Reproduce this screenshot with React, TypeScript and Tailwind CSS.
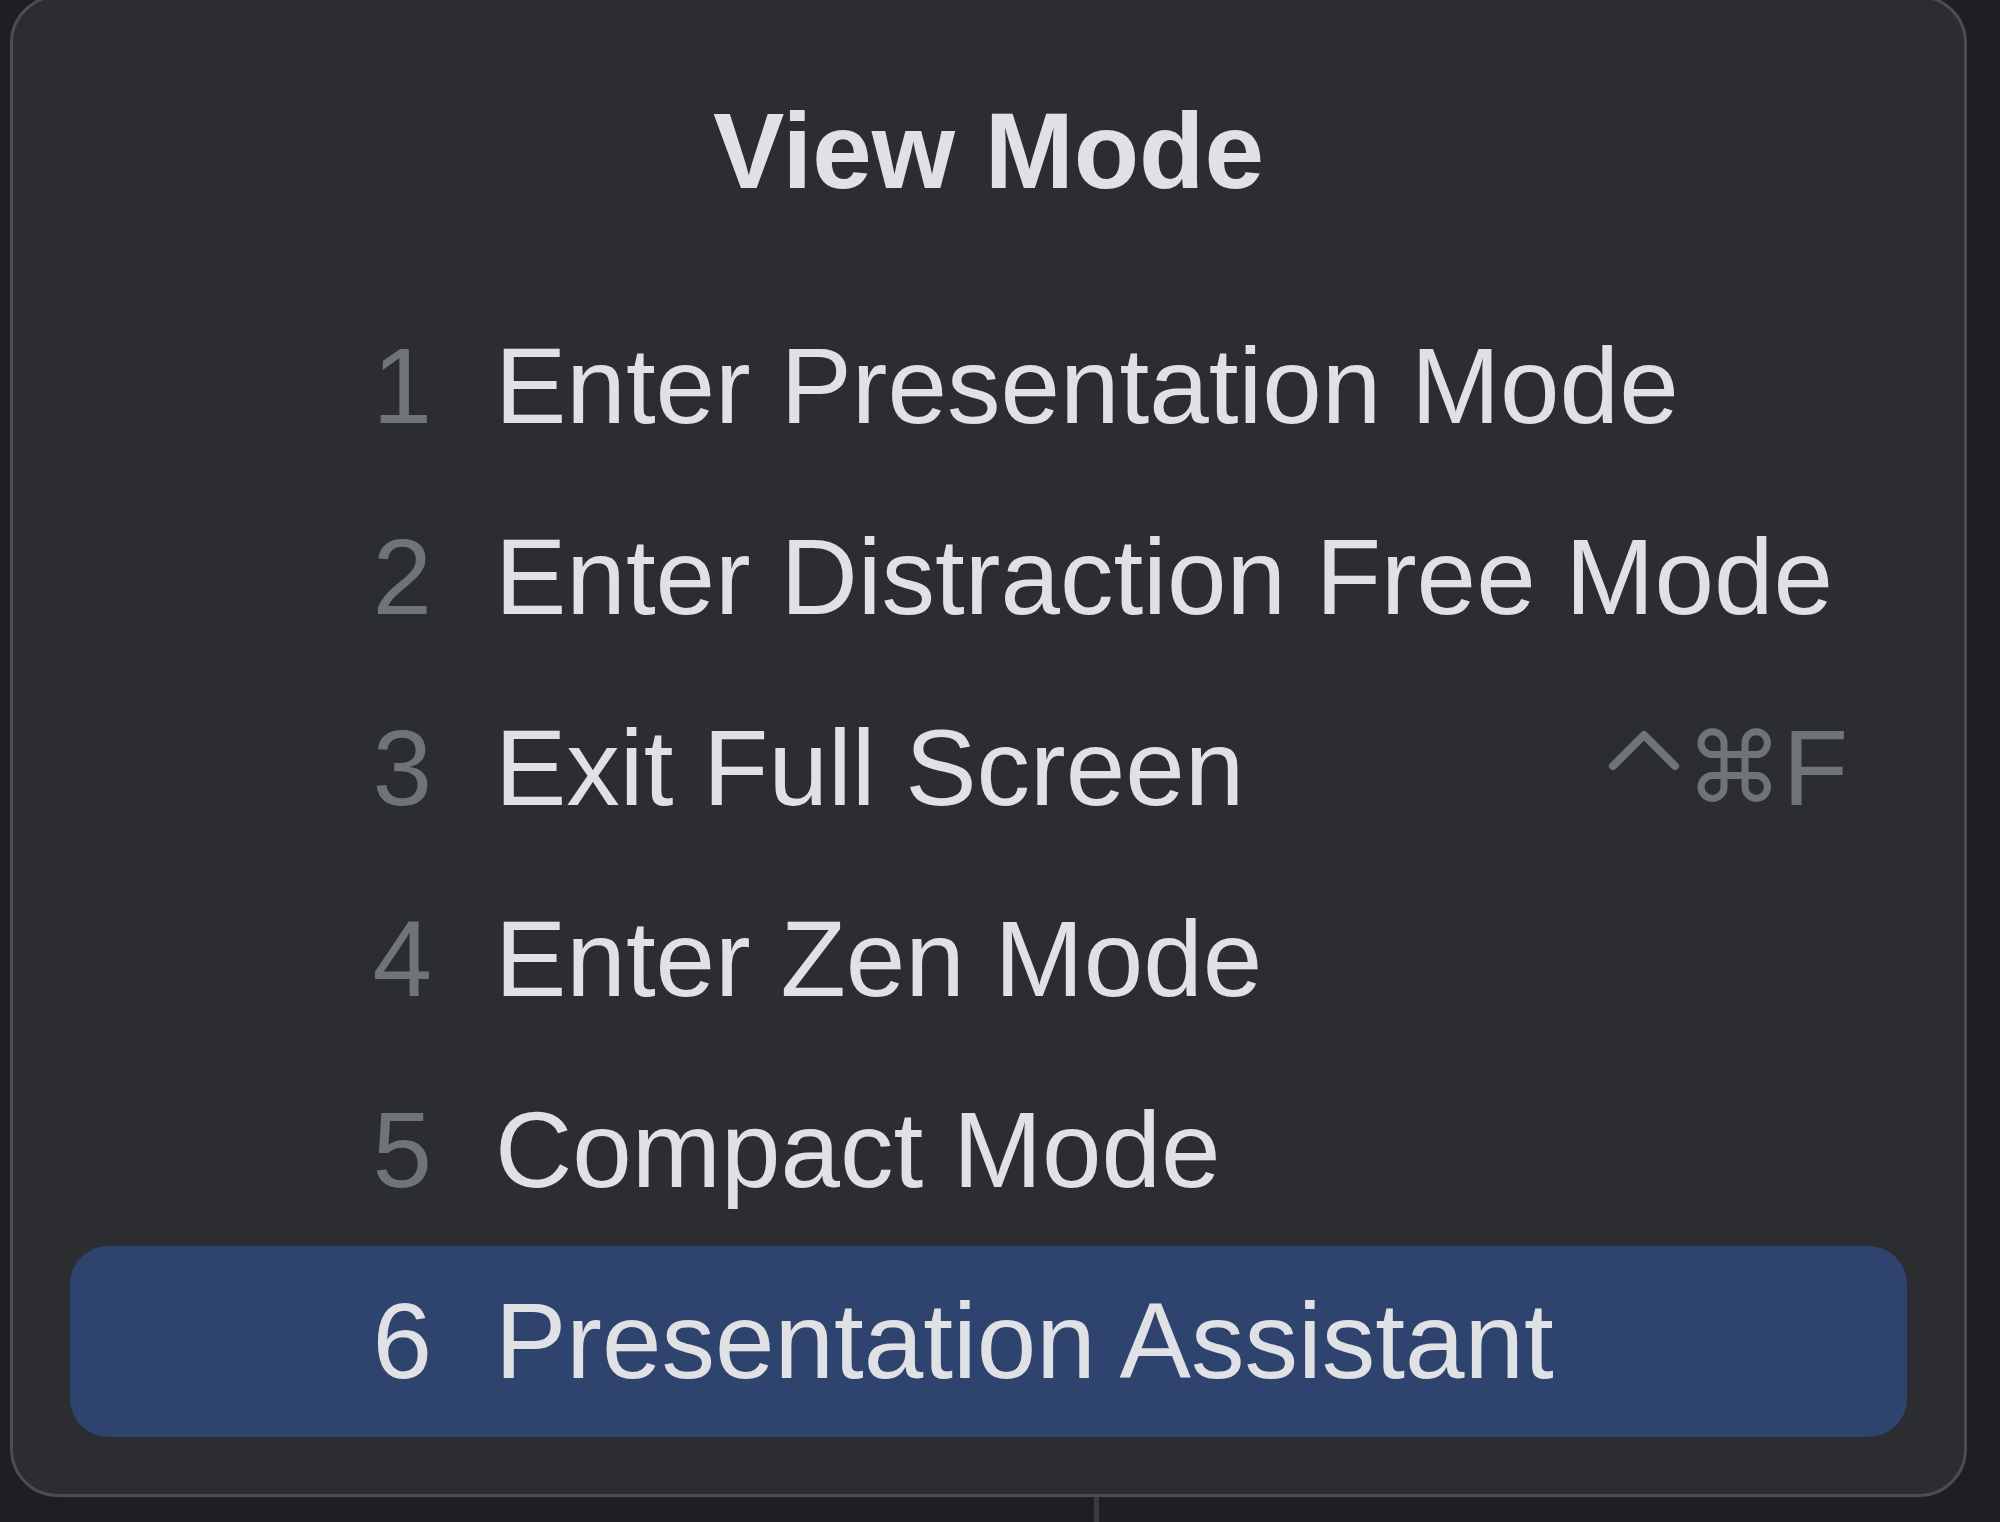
const items = [
  { n: "1", label: "Enter Presentation Mode" },
  { n: "2", label: "Enter Distraction Free Mode" },
  { n: "3", label: "Exit Full Screen", shortcut: true },
  { n: "4", label: "Enter Zen Mode" },
  { n: "5", label: "Compact Mode" },
  { n: "6", label: "Presentation Assistant", active: true },
];

const Shortcut = () => (
  <span className="ml-auto flex items-center text-[#6f737a]">
    {/* control key chevron */}
    <svg width="72" height="42" viewBox="0 0 72 42" className="mb-[38px] mr-[6px]" aria-label="⌃">
      <path d="M5 37 L36 6 L67 37" fill="none" stroke="#6f737a" strokeWidth="8" strokeLinecap="round" strokeLinejoin="round" />
    </svg>
    <span className="text-[97px]">⌘</span>
    <span>F</span>
  </span>
);

const ViewModePopup = () => {
  return (
    <div className="flex flex-col w-[2000px] h-[1522px] bg-[#1e1f22] overflow-hidden font-['Liberation_Sans','DejaVu_Sans',sans-serif]">
      <div className="ml-[10px] -mt-[5px] w-[1957px] h-[1502px] shrink-0 rounded-[48px] border-[3px] border-[#4b4d52] bg-[#2b2d30] px-[57px] pt-[58px]">
        <div className="h-[191px] flex items-center justify-center text-[107px] leading-[191px] font-bold text-[#dfe1e5]">
          View Mode
        </div>
        <div className="mt-[44px] flex flex-col">
          {items.map((item) => (
            <div
              key={item.n}
              className={
                item.active
                  ? "h-[191px] flex items-center pl-[302px] pr-[59px] rounded-[38px] bg-[#2e436e] text-[107px] leading-[191px]"
                  : "h-[191px] flex items-center pl-[302px] pr-[59px] text-[107px] leading-[191px]"
              }
            >
              <span
                className={
                  item.active
                    ? "w-[60px] text-right text-[#dfe1e5]"
                    : "w-[60px] text-right text-[#6f737a]"
                }
              >
                {item.n}
              </span>
              <span className="ml-[63px] text-[#dfe1e5]">{item.label}</span>
              {item.shortcut && <Shortcut />}
            </div>
          ))}
        </div>
      </div>
      <div className="ml-[1094px] w-[5px] flex-1 bg-[#3a3b3f]" />
    </div>
  );
};

export default function App() {
  return <ViewModePopup />;
}
